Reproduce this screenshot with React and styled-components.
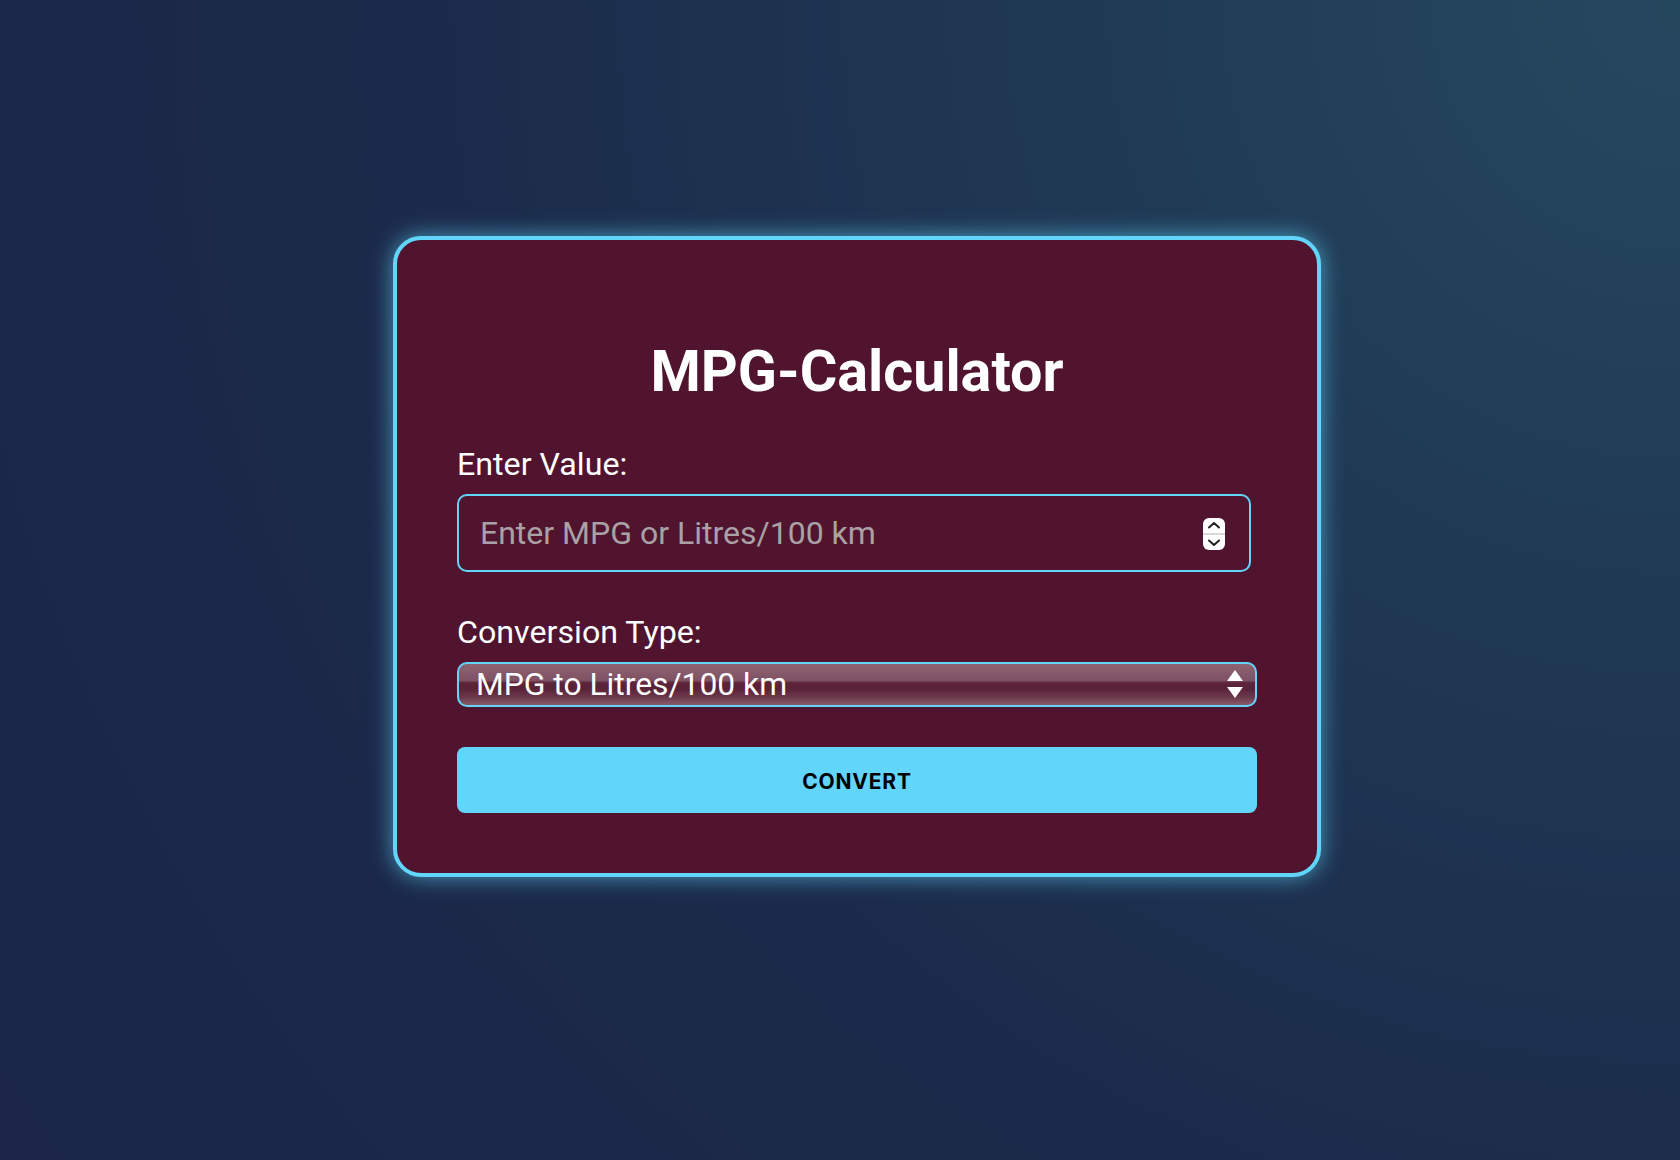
import React, { useState } from 'react'
import styled, { createGlobalStyle } from 'styled-components'

const cyan = '#61d5fa'

const GlobalStyle = createGlobalStyle`
  html, body {
    margin: 0;
    padding: 0;
    height: 100%;
  }
  body {
    font-family: Roboto, "Liberation Sans", Arial, sans-serif;
    background: radial-gradient(circle at 100% 0%, #26485f 0%, #203a56 28%, #1c2b4b 60%, #1a2547 100%);
    background-attachment: fixed;
    min-height: 1160px;
  }
`

const Page = styled.div`
  min-height: 1160px;
  box-sizing: border-box;
  display: flex;
  align-items: center;
  justify-content: center;
  padding: 0 0 48px 34px;
`

const Card = styled.div`
  width: 928px;
  box-sizing: border-box;
  padding: 99px 60px 60px;
  background: #50142e;
  border: 4px solid ${cyan};
  border-radius: 28px;
  box-shadow: 0 0 22px rgba(97, 213, 250, 0.65);
  display: flex;
  flex-direction: column;
`

const Title = styled.h1`
  margin: 0 0 42px;
  text-align: center;
  color: #fff;
  font-size: 57.5px;
  font-weight: 700;
  line-height: 66px;
`

const Label = styled.label`
  color: #fff;
  font-size: 32.2px;
  line-height: 35px;
  margin-bottom: ${p => p.$gap}px;
`

const Field = styled.div`
  position: relative;
  width: ${p => p.$width}px;
  margin-bottom: ${p => p.$gap}px;
`

const TextInput = styled.input`
  width: 100%;
  height: 78px;
  box-sizing: border-box;
  padding: 0 60px 0 21px;
  background: transparent;
  border: 2px solid ${cyan};
  border-radius: 10px;
  color: #fff;
  font-family: Roboto, "Liberation Sans", Arial, sans-serif;
  font-size: 32px;
  outline: none;

  &::placeholder {
    color: #a9a1a5;
  }
`

const Stepper = styled.div`
  position: absolute;
  right: 26px;
  top: 24px;
  width: 22px;
  height: 32px;
  border-radius: 6px;
  background: #fff;
  display: flex;
  flex-direction: column;
  align-items: center;
  justify-content: space-between;
  padding: 3px 0;
  box-sizing: border-box;

  &::after {
    content: '';
    position: absolute;
    left: 0;
    right: 0;
    top: 15px;
    height: 2px;
    background: #d8d8d8;
  }
`

const Select = styled.select`
  width: 100%;
  height: 45px;
  box-sizing: border-box;
  appearance: none;
  -webkit-appearance: none;
  padding: 0 50px 0 17px;
  border: 2px solid ${cyan};
  border-radius: 10px;
  color: #fff;
  font-family: Roboto, "Liberation Sans", Arial, sans-serif;
  font-size: 31.8px;
  outline: none;
  background:
    linear-gradient(
      to bottom,
      #8f6472 0%,
      #7e5163 40%,
      #5c2339 46%,
      #5a2237 60%,
      #6c3a4d 82%,
      #8a5b6b 100%
    );
`

const Arrows = styled.div`
  position: absolute;
  right: 14px;
  top: 8px;
  display: flex;
  flex-direction: column;
  gap: 6px;
  pointer-events: none;
`

const Button = styled.button`
  width: 100%;
  height: 66px;
  padding-top: 4px;
  border: none;
  border-radius: 8px;
  background: ${cyan};
  color: #000;
  font-family: Inter, Roboto, "Liberation Sans", Arial, sans-serif;
  font-size: 21px;
  font-weight: 700;
  letter-spacing: 0.8px;
  cursor: pointer;
`

export default function App () {
  const [value, setValue] = useState('')
  const [type, setType] = useState('mpg')

  return (
    <>
      <GlobalStyle />
      <Page>
        <Card>
          <Title>MPG-Calculator</Title>
          <Label $gap={12}>Enter Value:</Label>
          <Field $width={794} $gap={43}>
            <TextInput
              type='text'
              placeholder='Enter MPG or Litres/100 km'
              value={value}
              onChange={e => setValue(e.target.value)}
            />
            <Stepper>
              <svg width='14' height='8' viewBox='0 0 14 8'>
                <path d='M2 6.5 L7 2 L12 6.5' fill='none' stroke='#222' strokeWidth='2' strokeLinecap='round' strokeLinejoin='round' />
              </svg>
              <svg width='14' height='8' viewBox='0 0 14 8'>
                <path d='M2 1.5 L7 6 L12 1.5' fill='none' stroke='#222' strokeWidth='2' strokeLinecap='round' strokeLinejoin='round' />
              </svg>
            </Stepper>
          </Field>
          <Label $gap={12}>Conversion Type:</Label>
          <Field $width={800} $gap={40}>
            <Select value={type} onChange={e => setType(e.target.value)}>
              <option value='mpg'>MPG to Litres/100 km</option>
              <option value='l100'>Litres/100 km to MPG</option>
            </Select>
            <Arrows>
              <svg width='16' height='11' viewBox='0 0 16 11'>
                <polygon points='8,0 16,11 0,11' fill='#fff' />
              </svg>
              <svg width='16' height='11' viewBox='0 0 16 11'>
                <polygon points='0,0 16,0 8,11' fill='#fff' />
              </svg>
            </Arrows>
          </Field>
          <Button>CONVERT</Button>
        </Card>
      </Page>
    </>
  )
}
